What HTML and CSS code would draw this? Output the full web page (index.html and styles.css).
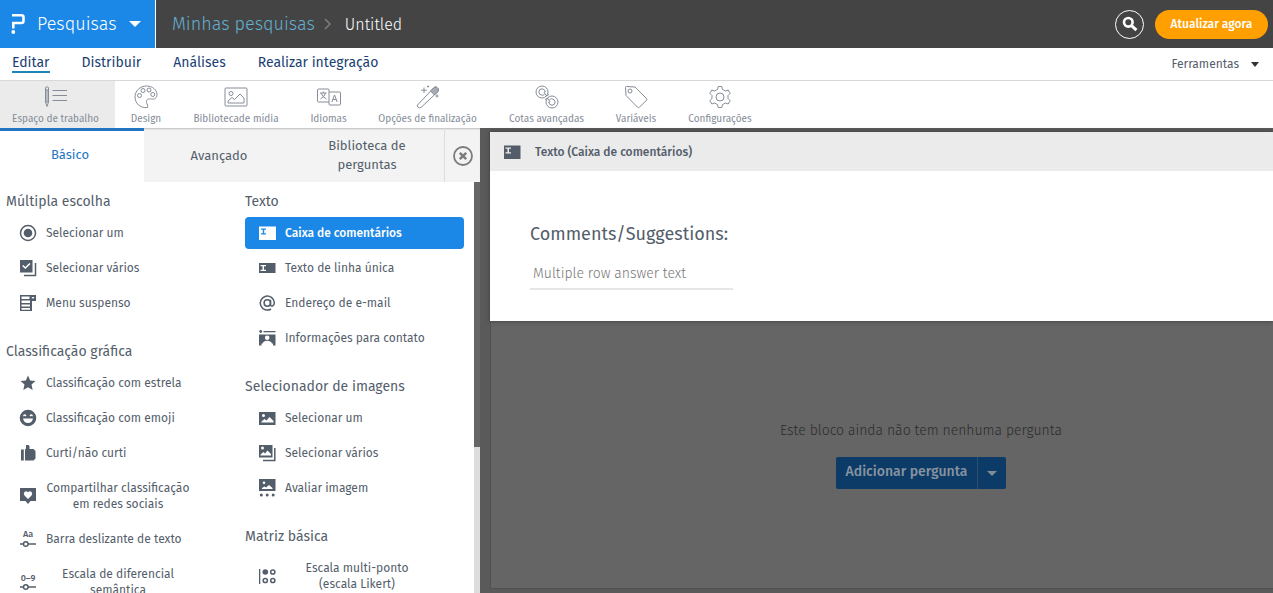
FILE: index.html
```html
<!DOCTYPE html>
<html lang="pt-BR">
<head>
<meta charset="utf-8">
<meta name="viewport" content="width=device-width, initial-scale=1">
<title>Pesquisas - Untitled</title>
<link rel="stylesheet" href="styles.css">
</head>
<body>
<div class="app">
  <header class="topbar">
    <button class="brand" type="button">
      <svg class="brand-logo" width="14" height="22" viewBox="0 0 14 22" aria-hidden="true"><path d="M1 2.300H10.500Q12.500 2.300 12.500 4.300V7.800Q12.500 10 10.500 10H2.300V15.500" fill="none" stroke="#fff" stroke-width="2.600"/><circle cx="2.300" cy="19" r="1.900" fill="#fff"/></svg>
      <span>Pesquisas</span>
      <svg width="12" height="6" viewBox="0 0 12 6" aria-hidden="true"><path d="M0 0H12L6 6Z" fill="#fff"/></svg>
    </button>
    <div class="crumbs">
      <a class="crumb-link" href="#">Minhas pesquisas</a>
      <svg width="7" height="12" viewBox="0 0 7 12" aria-hidden="true"><path d="M1 1L6 6L1 11" fill="none" stroke="#7d7d7d" stroke-width="1.500"/></svg>
      <span class="crumb-current">Untitled</span>
    </div>
    <button class="search" type="button" aria-label="Pesquisar">
      <svg width="16" height="16" viewBox="0 0 16 16" aria-hidden="true"><circle cx="6.300" cy="6.300" r="4.300" fill="none" stroke="#fff" stroke-width="2.600"/><path d="M9.800 9.800L14.400 14.200" stroke="#fff" stroke-width="3"/></svg>
    </button>
    <button class="upgrade" type="button">Atualizar agora</button>
  </header>

  <nav class="nav">
    <a class="nav-link nav-link-active" href="#">Editar</a>
    <a class="nav-link" href="#">Distribuir</a>
    <a class="nav-link" href="#">Análises</a>
    <a class="nav-link" href="#">Realizar integração</a>
    <button class="tools-menu" type="button">Ferramentas
      <svg width="8" height="5" viewBox="0 0 8 5" aria-hidden="true"><path d="M0 0H8L4 5Z" fill="#333"/></svg>
    </button>
  </nav>

  <div class="toolbar">
    <button class="tool tool-active" type="button">
      <svg class="tool-icon" viewBox="0 0 24 24" aria-hidden="true"><path d="M1.500 2.500Q3 1 4.500 2.500V17L3 21.500L1.500 17ZM1.500 5H4.500M1.500 17H4.500M3 5V17M8.500 5.500H23M8.500 10.500H23M8.500 15.500H23"/></svg>
      <span>Espaço de trabalho</span>
    </button>
    <button class="tool" type="button">
      <svg class="tool-icon" viewBox="0 0 24 24" aria-hidden="true"><path d="M13.500 22.500C6 23.500 1 18 1 12C1 6 6 1 12.500 1C18.500 1 23 5 23 9.500C23 13 20.500 14.500 17.500 14C14.500 13.500 12 14.500 12.500 17.500C12.800 19.500 14.500 20.500 13.500 22.500Z"/><circle cx="5.500" cy="10.500" r="2"/><circle cx="9" cy="5.500" r="2"/><circle cx="15" cy="5" r="2"/><circle cx="18.800" cy="9.500" r="2"/></svg>
      <span>Design</span>
    </button>
    <button class="tool" type="button">
      <svg class="tool-icon" viewBox="0 0 24 24" aria-hidden="true"><rect x="1" y="3" width="22" height="18" rx="1"/><circle cx="7" cy="8.500" r="2"/><path d="M4 18V16L8 12.500L10.500 14.500L16 9L20 13V18Z"/></svg>
      <span>Bibliotecade mídia</span>
    </button>
    <button class="tool" type="button">
      <svg class="tool-icon" viewBox="0 0 24 24" aria-hidden="true"><path d="M12 17H1.500Q0.500 17 0.500 16V5Q0.500 4 1.500 4H11Q12 4 12 5V19Q12 20 13 20H22.500Q23.500 20 23.500 19V8Q23.500 7 22.500 7H12"/><path d="M3 8H9.500M6.200 6.500V8M8.500 8Q7.500 12 3.500 14M4 8Q5.500 12 9.500 14M14.800 17L17.500 10L20.200 17M15.800 14.500H19.200"/></svg>
      <span>Idiomas</span>
    </button>
    <button class="tool" type="button">
      <svg class="tool-icon" viewBox="0 0 24 24" aria-hidden="true"><path d="M1.500 20L18 2.500Q19.500 1.200 21 2.500L22 3.500Q23.200 5 22 6.500L5 22.500Q3.500 23.500 2 22Q0.500 21 1.500 20Z"/><path class="tool-fill" d="M14.500 6L18 2.500Q19.500 1.200 21 2.500L22 3.500Q23.200 5 22 6.500L18.500 10Z"/><path d="M8 2.500V8M5.200 5.200H10.800M12 0.500V2.500M11 1.500H13M21 9.500V12.500M19.500 11H22.500"/></svg>
      <span>Opções de finalização</span>
    </button>
    <button class="tool" type="button">
      <svg class="tool-icon" viewBox="0 0 24 24" aria-hidden="true"><circle cx="7" cy="7" r="6"/><circle cx="17" cy="17" r="6"/><path d="M9.500 9.500L7.500 10.300Q4 10 3.800 7Q4 3.800 7 3.800Q10 4 10.300 7L9 7.500L12 11M14.500 14.500L16.500 13.700Q20 14 20.200 17Q20 20.200 17 20.200Q14 20 13.700 17L15 16.500L12 13M10 11.500L14 9.500M10 14.500L14 12.500"/></svg>
      <span>Cotas avançadas</span>
    </button>
    <button class="tool" type="button">
      <svg class="tool-icon" viewBox="0 0 24 24" aria-hidden="true"><path d="M1.500 2.500Q1.500 1.500 2.500 1.500L11 2L22.500 13.500Q23.300 14.300 22.500 15.200L15.500 22.200Q14.500 23 13.500 22.200L2 10.500Z"/><circle cx="6" cy="6" r="2"/></svg>
      <span>Variáveis</span>
    </button>
    <button class="tool" type="button">
      <svg class="tool-icon" viewBox="0 0 24 24" aria-hidden="true"><path d="M9.500 4.500L10.200 1.500H13.800L14.500 4.500Q16 5 17.200 6L20.200 5L22.200 8.300L20 10.500V13.500L22.200 15.700L20.200 19L17.200 18Q16 19 14.500 19.500L13.800 22.500H10.200L9.500 19.500Q8 19 6.800 18L3.800 19L1.800 15.700L4 13.500V10.500L1.800 8.300L3.800 5L6.800 6Q8 5 9.500 4.500Z"/><circle cx="12" cy="12" r="4"/></svg>
      <span>Configurações</span>
    </button>
  </div>

  <div class="workspace">
    <aside class="panel">
      <div class="tabs">
        <button class="tab tab-active" type="button">Básico</button>
        <button class="tab" type="button">Avançado</button>
        <button class="tab" type="button">Biblioteca de<br>perguntas</button>
        <button class="tab-close" type="button" aria-label="Fechar">
          <svg width="20" height="20" viewBox="0 0 20 20" aria-hidden="true"><circle cx="10" cy="10" r="9" fill="none" stroke="#7b7b7b" stroke-width="1.800"/><path d="M6.800 6.800L13.200 13.200M13.200 6.800L6.800 13.200" stroke="#7b7b7b" stroke-width="2.400"/></svg>
        </button>
      </div>
      <div class="panel-body">
        <div class="column column-left">
          <section class="group">
            <h2 class="group-title">Múltipla escolha</h2>
            <button class="item" type="button"><svg class="icon" viewBox="0 0 18 18"><circle cx="9" cy="9" r="7.500" fill="none" stroke="currentColor" stroke-width="1.500"/><circle cx="9" cy="9" r="4.300"/></svg><span>Selecionar um</span></button>
            <button class="item" type="button"><svg class="icon" viewBox="0 0 18 18"><path fill-rule="evenodd" d="M1 1H13.500V13.500H1ZM3.200 7L6.300 10L11.500 5L10.400 4L6.300 7.900L4.300 6Z"/><path d="M16.500 4V16.500H5" fill="none" stroke="currentColor" stroke-width="1.500"/></svg><span>Selecionar vários</span></button>
            <button class="item" type="button"><svg class="icon" viewBox="0 0 18 18"><path fill-rule="evenodd" d="M1 1H17V7H13V17H1ZM2.500 2.500V5H10.500V2.500ZM2.500 6.500V9H11V6.500ZM2.500 10.500V12.500H11V10.500ZM2.500 14V15.700H11V14ZM12.500 3L14 5L15.500 3Z"/></svg><span>Menu suspenso</span></button>
          </section>
          <section class="group">
            <h2 class="group-title">Classificação gráfica</h2>
            <button class="item" type="button"><svg class="icon" viewBox="0 0 18 18"><path d="M9 1.500L11.200 6.500L16.500 7L12.500 10.600L13.700 16L9 13.200L4.300 16L5.500 10.600L1.500 7L6.800 6.500Z"/></svg><span>Classificação com estrela</span></button>
            <button class="item" type="button"><svg class="icon" viewBox="0 0 18 18"><path fill-rule="evenodd" d="M9 0.700A8.300 8.300 0 1 0 9 17.300A8.300 8.300 0 1 0 9 0.700ZM4 9.500H14Q13 14 9 14Q5 14 4 9.500ZM4 6.700Q5.700 4 7.500 6.700L6.500 7.500L5.700 6.700L4.800 7.500ZM10.500 6.700Q12.300 4 14 6.700L13.200 7.500L12.300 6.700L11.500 7.500Z"/></svg><span>Classificação com emoji</span></button>
            <button class="item" type="button"><svg class="icon" viewBox="0 0 18 18"><path d="M2 5.500H4.800V16.500H2ZM6 5.500L7 4.500V1H9.500L10.500 2V5H14.500L16.500 7V14.500L14.500 16.500H6Z"/></svg><span>Curti/não curti</span></button>
            <button class="item" type="button"><svg class="icon" viewBox="0 0 18 18"><path fill-rule="evenodd" d="M1 1H17V14H11.500L9 17L6.500 14H1ZM9 12L12.500 8.500Q14 6.500 12.500 5Q10.500 3.500 9 5.500Q7.500 3.500 5.500 5Q4 6.500 5.500 8.500Z"/></svg><span class="item-wrapped">Compartilhar classificação<br>em redes sociais</span></button>
            <button class="item" type="button"><svg class="icon" viewBox="0 0 18 18"><text class="icon-text" x="9" y="7" text-anchor="middle">Aa</text><path d="M1 14H4.500M9 14H17" stroke="currentColor" stroke-width="1.500"/><circle cx="6.800" cy="14" r="2.300" fill="none" stroke="currentColor" stroke-width="1.500"/></svg><span>Barra deslizante de texto</span></button>
            <button class="item" type="button"><svg class="icon" viewBox="0 0 18 18"><text class="icon-text" x="9" y="8" text-anchor="middle">0–9</text><path d="M1 14H4.500M9 14H17" stroke="currentColor" stroke-width="1.500"/><circle cx="6.800" cy="14" r="2.300" fill="none" stroke="currentColor" stroke-width="1.500"/></svg><span class="item-wrapped">Escala de diferencial<br>semântica</span></button>
          </section>
        </div>
        <div class="column column-right">
          <section class="group">
            <h2 class="group-title">Texto</h2>
            <button class="item item-active" type="button"><svg class="icon" viewBox="0 0 18 18"><path fill-rule="evenodd" d="M1 2.500H18V16H1ZM3 4.500V5.800H4.800V9.200H3V10.500H8V9.200H6.200V5.800H8V4.500Z"/></svg><span>Caixa de comentários</span></button>
            <button class="item" type="button"><svg class="icon" viewBox="0 0 18 18"><path fill-rule="evenodd" d="M1 4H17.500V14H1ZM2.500 6V7.300H4.500V10.700H2.500V12H8V10.700H6V7.300H8V6Z"/></svg><span>Texto de linha única</span></button>
            <button class="item" type="button"><svg class="icon" viewBox="0 0 18 18"><g fill="none" stroke="currentColor" stroke-width="1.500"><circle cx="9.300" cy="9" r="3.200"/><path d="M12.500 5.800V10.500Q12.700 12.500 14.500 12Q16.500 11 16.300 8.500A7 7 0 1 0 13 15"/></g></svg><span>Endereço de e-mail</span></button>
            <button class="item" type="button"><svg class="icon" viewBox="0 0 18 18"><circle cx="2.700" cy="2.500" r="1.400"/><path d="M5.500 2H17.500V3.300H5.500Z"/><path fill-rule="evenodd" d="M1 5.500H17.500V16.500H15V14.500H3.500V16.500H1ZM9.200 6.500A2.300 2.300 0 1 0 9.200 11.100A2.300 2.300 0 1 0 9.200 6.500ZM4.500 14.500Q5.500 11.700 9.200 11.700Q13 11.700 14 14.500Z"/></svg><span>Informações para contato</span></button>
          </section>
          <section class="group">
            <h2 class="group-title">Selecionador de imagens</h2>
            <button class="item" type="button"><svg class="icon" viewBox="0 0 18 18"><path fill-rule="evenodd" d="M1 3H17.500V16H1ZM3.500 13.500H15.500V12L11.500 8L8.500 11.500L6.500 10L3.500 12.500ZM5.500 5A1.500 1.500 0 1 0 5.500 8A1.500 1.500 0 1 0 5.500 5Z"/></svg><span>Selecionar um</span></button>
            <button class="item" type="button"><svg class="icon" viewBox="0 0 18 18"><path fill-rule="evenodd" d="M1 1H14.500V13.500H1ZM2.500 11.500H13V10L9.500 6.500L7 9.500L5.500 8L2.500 10.500ZM4.500 2.500A1.500 1.500 0 1 0 4.500 5.500A1.500 1.500 0 1 0 4.500 2.500Z"/><path d="M16.800 4V16.500H5" fill="none" stroke="currentColor" stroke-width="1.500"/></svg><span>Selecionar vários</span></button>
            <button class="item" type="button"><svg class="icon" viewBox="0 0 18 18"><path fill-rule="evenodd" d="M1 0H17.500V12H1ZM4 10H14.500V9L11 6L8 8.500L6.500 7.500L4 9ZM6 2.500A1.300 1.300 0 1 0 6 5.100A1.300 1.300 0 1 0 6 2.500Z"/><circle cx="3.300" cy="16" r="1.500"/><circle cx="9.200" cy="16" r="1.500"/><circle cx="15.200" cy="16" r="1.500"/></svg><span>Avaliar imagem</span></button>
          </section>
          <section class="group">
            <h2 class="group-title">Matriz básica</h2>
            <button class="item" type="button"><svg class="icon" viewBox="0 0 18 18"><path d="M1 2H2.300V17H1Z"/><circle cx="7.300" cy="5" r="2.800"/><g fill="none" stroke="currentColor" stroke-width="1.500"><circle cx="14.800" cy="5" r="2.100"/><circle cx="7.300" cy="13.500" r="2.100"/><circle cx="14.800" cy="13.500" r="2.100"/></g></svg><span class="item-wrapped">Escala multi-ponto<br>(escala Likert)</span></button>
          </section>
        </div>
        <div class="scroll-track"><div class="scroll-thumb"></div></div>
      </div>
    </aside>

    <main class="canvas">
      <section class="question">
        <header class="question-head">
          <svg class="icon" viewBox="0 0 18 18" aria-hidden="true"><path fill-rule="evenodd" d="M1 2.500H17.500V16H1ZM2.500 4.500V5.800H4.500V9.200H2.500V10.500H8V9.200H6V5.800H8V4.500Z"/></svg>
          <span>Texto (Caixa de comentários)</span>
        </header>
        <div class="question-body">
          <label class="question-title" for="answer">Comments/Suggestions:</label>
          <input class="answer" id="answer" type="text" placeholder="Multiple row answer text">
        </div>
      </section>
      <section class="block">
        <p class="block-empty">Este bloco ainda não tem nenhuma pergunta</p>
        <div class="add-group">
          <button class="add" type="button">Adicionar pergunta</button>
          <button class="add-more" type="button" aria-label="Mais opções"><svg width="10" height="5" viewBox="0 0 10 5" aria-hidden="true"><path d="M0 0H10L5 5Z" fill="#7f8b96"/></svg></button>
        </div>
      </section>
    </main>
  </div>
</div>
</body>
</html>
```

FILE: styles.css
```css
* { box-sizing: border-box; }

body {
  margin: 0;
  font-family: "Fira Sans", Roboto, "Noto Sans", sans-serif;
  font-size: 12px;
  line-height: 16px;
  color: #545e6b;
  background: #fff;
}

button {
  margin: 0;
  padding: 0;
  border: 0;
  background: none;
  font: inherit;
  color: inherit;
  cursor: pointer;
}

a { text-decoration: none; }
svg { display: block; flex: none; }

.app {
  display: flex;
  flex-direction: column;
  height: 100vh;
  overflow: hidden;
}

/* Top bar */
.topbar {
  display: flex;
  align-items: center;
  flex: none;
  height: 48px;
  padding-right: 5px;
  background: #444;
}
.brand {
  display: flex;
  align-items: center;
  gap: 12px;
  align-self: stretch;
  width: 156px;
  padding-left: 11px;
  border-right: 1px solid #fff;
  background: #1b87e6;
  color: #fff;
  font-size: 18px;
  font-weight: 300;
}
.crumbs {
  display: flex;
  align-items: center;
  gap: 9px;
  flex: 1;
  padding-left: 16px;
}
.crumb-link { color: #65aed0; font-size: 18px; font-weight: 300; }
.crumb-current { color: #fff; font-size: 16px; font-weight: 300; padding: 2px 0 0 5px; }
.search {
  display: grid;
  place-items: center;
  width: 29px;
  height: 29px;
  border: 1px solid #fff;
  border-radius: 50%;
}
.upgrade {
  width: 113px;
  height: 29px;
  margin-left: 11px;
  border-radius: 15px;
  background: #ff9f00;
  color: #fff;
  font-weight: 500;
}

/* Main navigation */
.nav {
  display: flex;
  align-items: center;
  flex: none;
  gap: 32px;
  height: 33px;
  padding: 0 14px 0 12px;
  border-bottom: 1px solid #d8d8d8;
  font-size: 14px;
}
.nav-link {
  padding-bottom: 1px;
  line-height: 14px;
  color: #1b3f73;
  border-bottom: 2px solid transparent;
}
.nav-link-active { border-bottom-color: #1b87b6; }
.tools-menu {
  display: flex;
  align-items: center;
  gap: 12px;
  margin-left: auto;
  font-size: 12px;
}

/* Tool strip */
.toolbar {
  display: grid;
  grid-template-columns: 115px 62px 118px 67px 131px 107px 72px 96px;
  flex: none;
  height: 47px;
}
.tool {
  display: flex;
  flex-direction: column;
  align-items: center;
  padding-top: 4px;
  gap: 2px;
  font-size: 10px;
  color: #848b98;
  white-space: nowrap;
}
.tool-active { background: #ebebeb; padding-right: 4px; }
.tool-icon {
  width: 24px;
  height: 24px;
  fill: none;
  stroke: #868c98;
  stroke-width: 1;
}
.tool-fill { fill: #a6abb5; }

/* Question type panel */
.workspace {
  display: flex;
  flex: 1;
  min-height: 0;
}
.panel {
  display: flex;
  flex-direction: column;
  flex: none;
  width: 480px;
  background: #fff;
}
.tabs {
  display: grid;
  grid-template-columns: 144px 150px 1fr 36px;
  flex: none;
  height: 54px;
  background: #f3f3f3;
  box-shadow: inset 0 2px 2px -1px #bbb;
}
.tab { font-size: 13px; line-height: 19px; padding-right: 4px; }
.tab:nth-child(2) { padding-right: 0; }
.tab-active {
  border-top: 3px solid #2375c4;
  background: #fff;
  color: #2375c4;
  padding-bottom: 4px;
}
.tab-close {
  display: grid;
  place-items: center;
  padding-top: 2px;
  border-left: 1px solid #ddd;
}
.panel-body {
  display: flex;
  flex: 1;
  min-height: 0;
  overflow: hidden;
}
.column {
  display: flex;
  flex-direction: column;
  gap: 25px;
  padding-top: 12px;
}
.column-left { width: 239px; padding-left: 6px; }
.column-right { flex: 1; padding: 12px 10px 0 6px; }
.group {
  display: flex;
  flex-direction: column;
  gap: 3px;
}
.group-title {
  margin: 0 0 4px;
  font-size: 14px;
  line-height: 16px;
  font-weight: 400;
  white-space: nowrap;
}
.item {
  display: flex;
  align-items: center;
  gap: 9px;
  padding: 8px 13px;
  border-radius: 4px;
  text-align: left;
  white-space: nowrap;
}
.item-active { background: #1b87e6; color: #fff; font-weight: 500; }
.item-wrapped { width: 144px; text-align: center; }
.icon {
  width: 18px;
  height: 18px;
  margin: -1px 0;
  fill: currentColor;
}
.icon-text { font-size: 9px; font-weight: 500; }
.scroll-track { flex: none; width: 6px; background: #ddd; }
.scroll-thumb { height: 265px; background: #666; }

/* Dimmed canvas with the question in focus */
.canvas {
  display: flex;
  flex-direction: column;
  flex: 1;
  min-width: 0;
  padding: 4px 0 4px 10px;
  background: #5a5a5a;
}
.question {
  position: relative;
  background: #fff;
  box-shadow: 0 0 4px #3a3a3a;
}
.question-head {
  display: flex;
  align-items: center;
  gap: 14px;
  height: 39px;
  padding-left: 13px;
  background: #ebebeb;
  font-weight: 500;
}
.question-body {
  display: flex;
  flex-direction: column;
  align-items: flex-start;
  gap: 15px;
  padding: 51px 40px 31px;
}
.question-title { font-size: 18px; line-height: 24px; }
.answer {
  width: 203px;
  height: 29px;
  padding: 0 3px 2px;
  border: 0;
  border-bottom: 2px solid #e6e6e6;
  font: inherit;
  font-size: 14px;
  font-weight: 300;
  color: #545e6b;
}
.answer::placeholder { color: #777; opacity: 1; }
.block {
  display: flex;
  flex-direction: column;
  align-items: center;
  gap: 16px;
  flex: 1;
  padding: 100px 0 0 78px;
  border-bottom: 1px solid #505050;
  border-left: 1px solid #505050;
  background: #656565;
}
.block-empty {
  margin: 0;
  font-size: 14px;
  line-height: 20px;
  font-weight: 300;
  color: #2c2c2c;
}
.add-group { display: flex; height: 32px; }
.add, .add-more { background: #0b3b66; color: #8793a0; }
.add {
  padding: 0 10px 2px;
  border-radius: 2px 0 0 2px;
  font-size: 14px;
  font-weight: 500;
}
.add-more {
  display: grid;
  place-items: center;
  width: 29px;
  border-left: 1px solid #2b4f70;
  border-radius: 0 2px 2px 0;
}
```
